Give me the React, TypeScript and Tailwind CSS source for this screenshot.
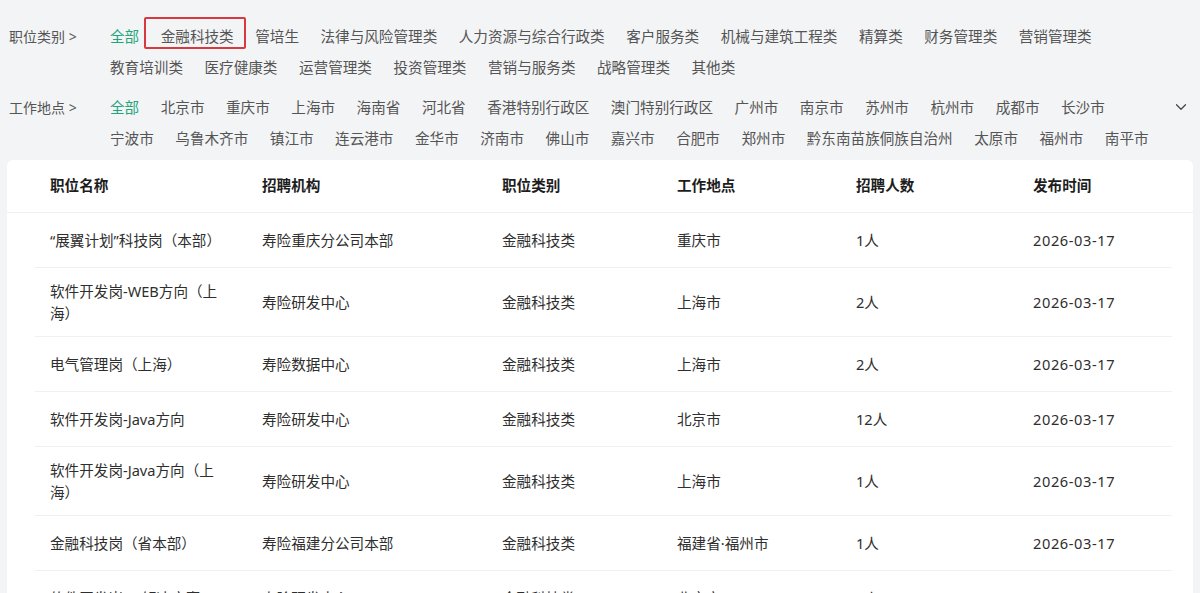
import { ChevronDown } from 'lucide-react';

const categories = [
  '全部',
  '金融科技类',
  '管培生',
  '法律与风险管理类',
  '人力资源与综合行政类',
  '客户服务类',
  '机械与建筑工程类',
  '精算类',
  '财务管理类',
  '营销管理类',
  '教育培训类',
  '医疗健康类',
  '运营管理类',
  '投资管理类',
  '营销与服务类',
  '战略管理类',
  '其他类',
];

const cities = [
  '全部', '北京市', '重庆市', '上海市', '海南省', '河北省', '香港特别行政区', '澳门特别行政区',
  '广州市', '南京市', '苏州市', '杭州市', '成都市', '长沙市', '宁波市', '乌鲁木齐市', '镇江市',
  '连云港市', '金华市', '济南市', '佛山市', '嘉兴市', '合肥市', '郑州市', '黔东南苗族侗族自治州',
  '太原市', '福州市', '南平市',
];

const jobs = [
  ['“展翼计划”科技岗（本部）', '寿险重庆分公司本部', '金融科技类', '重庆市', '1人', '2026-03-17'],
  ['软件开发岗-WEB方向（上海）', '寿险研发中心', '金融科技类', '上海市', '2人', '2026-03-17'],
  ['电气管理岗（上海）', '寿险数据中心', '金融科技类', '上海市', '2人', '2026-03-17'],
  ['软件开发岗-Java方向', '寿险研发中心', '金融科技类', '北京市', '12人', '2026-03-17'],
  ['软件开发岗-Java方向（上海）', '寿险研发中心', '金融科技类', '上海市', '1人', '2026-03-17'],
  ['金融科技岗（省本部）', '寿险福建分公司本部', '金融科技类', '福建省·福州市', '1人', '2026-03-17'],
  ['软件开发岗-AI解决方案', '寿险研发中心', '金融科技类', '北京市', '6人', '2026-03-17'],
];

const headers = ['职位名称', '招聘机构', '职位类别', '工作地点', '招聘人数', '发布时间'];

const cols = 'grid grid-cols-[212px_240px_175px_179px_177px_1fr]';

function FilterRow({ label, items, marked }: { label: string; items: string[]; marked?: string }) {
  return (
    <div className="flex pl-[9px] leading-[31px]">
      <div className="w-[101px] shrink-0 text-[14px] text-[#555]">{label}</div>
      <div className="flex w-[1055px] flex-wrap gap-x-[21.5px] text-[14.6px] text-[#555]">
        {items.map((item, i) => (
          <span key={item} className={i === 0 ? 'relative text-[#22a57a]' : 'relative'}>
            {item}
            {item === marked && (
              <span className="absolute -left-[17px] -right-[12px] -top-[4px] bottom-[3px] rounded-[2px] border-2 border-[#d8393f]" />
            )}
          </span>
        ))}
      </div>
    </div>
  );
}

export default function App() {
  return (
    <div className="min-h-screen bg-[#f3f4f5] pt-[21px] font-['Noto_Sans','Noto_Sans_CJK_SC',sans-serif]">
      {/* Filters */}
      <FilterRow label="职位类别 >" items={categories} marked="金融科技类" />
      <div className="relative mt-[9px]">
        <FilterRow label="工作地点 >" items={cities} />
        <ChevronDown className="absolute right-[10px] top-[6px] h-[18px] w-[18px] text-[#444]" strokeWidth={1.6} />
      </div>

      {/* Job table */}
      <div className="mx-[7px] mt-[6px] rounded-t-md bg-white text-[14.6px]">
        <div className={`${cols} h-[53px] items-center border-b border-[#eef0f2] pl-[43px] font-semibold text-[#1d1d1d]`}>
          {headers.map((h) => (
            <div key={h}>{h}</div>
          ))}
        </div>
        {jobs.map((row) => (
          <div key={row[0]} className="ml-[28px] mr-[21px] border-b border-[#eef0f2]">
            <div className={`${cols} min-h-[54px] items-center py-[12px] pl-[15px] leading-[22px] text-[#2e2e2e]`}>
              <div className="pr-[37px]">{row[0]}</div>
              <div>{row[1]}</div>
              <div>{row[2]}</div>
              <div>{row[3]}</div>
              <div>{row[4]}</div>
              <div className="tracking-[0.6px]">{row[5]}</div>
            </div>
          </div>
        ))}
      </div>
    </div>
  );
}
